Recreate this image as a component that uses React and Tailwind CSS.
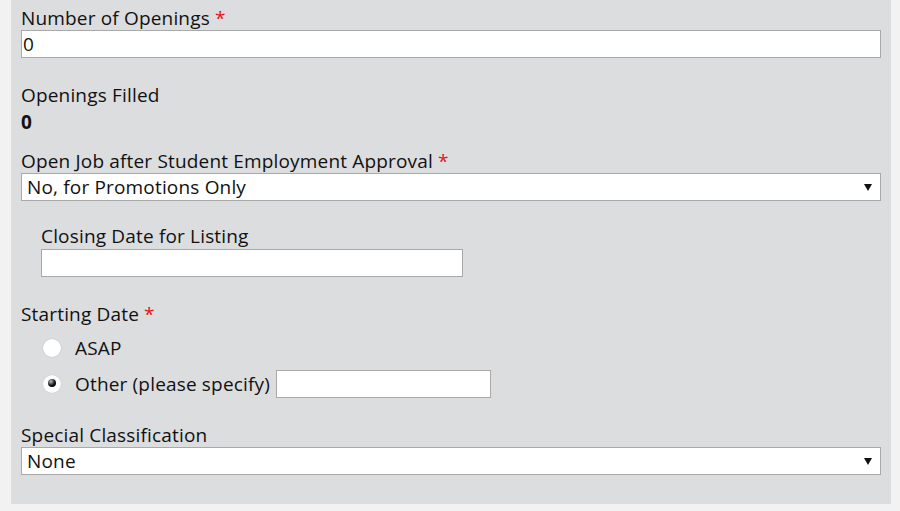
import React from 'react';

const Required = () => <span className="text-[#e8121b]"> *</span>;

const Label = ({ children, className = '' }) => (
  <div className={`text-[19px] leading-[24px] tracking-[0.17px] ${className}`}>{children}</div>
);

const TextBox = ({ value = '', className = '' }) => (
  <input
    type="text"
    readOnly
    defaultValue={value}
    className={`h-[28px] border border-[#a9a9a9] bg-white pl-[1px] text-[19px] leading-[24px] text-[#111] outline-none ${className}`}
    style={{ fontFamily: '"Open Sans", sans-serif' }}
  />
);

const Select = ({ value }) => (
  <div className="flex h-[28px] w-full items-center justify-between border border-[#a9a9a9] bg-white pl-[5px] pr-[8px]">
    <span className="text-[19px] leading-[24px] tracking-[0.17px]">{value}</span>
    <svg width="8" height="7" viewBox="0 0 8 7">
      <polygon points="0,0 8,0 4,7" fill="#111" />
    </svg>
  </div>
);

const Radio = ({ checked }) => (
  <div className="relative h-[18px] w-[18px] rounded-full bg-white shadow-[0_0_1px_rgba(0,0,0,0.25)]">
    {checked && (
      <div className="absolute left-[5px] top-[4px] h-[8px] w-[8px] rounded-full bg-[radial-gradient(circle_at_35%_30%,#bbbbbb,#111111_55%,#000000)]" />
    )}
  </div>
);

export default function App() {
  return (
    <div
      className="min-h-[511px] bg-[#f2f2f2] pl-[11px] pr-[9px] text-[#111]"
      style={{ fontFamily: '"Open Sans", sans-serif' }}
    >
      <div className="flex flex-col bg-[#dcdddf] px-[10px] pt-[6px] pb-[29px]">
        <Label>
          Number of Openings<Required />
        </Label>
        <TextBox value="0" className="w-full" />

        <Label className="mt-[25px]">Openings Filled</Label>
        <Label className="mt-[3px] font-bold">0</Label>

        <Label className="mt-[15px]">
          Open Job after Student Employment Approval<Required />
        </Label>
        <Select value="No, for Promotions Only" />

        <div className="mt-[23px] flex flex-col pl-[20px]">
          <Label>Closing Date for Listing</Label>
          <TextBox className="mt-[1px] w-[422px]" />
        </div>

        <Label className="mt-[25px]">
          Starting Date<Required />
        </Label>
        <div className="mt-[10px] flex h-[24px] items-center">
          <div className="ml-[22px] w-[32px]">
            <Radio />
          </div>
          <Label>ASAP</Label>
        </div>
        <div className="mt-[10px] flex h-[28px] items-center">
          <div className="ml-[22px] w-[32px]">
            <Radio checked />
          </div>
          <Label>Other (please specify)</Label>
          <TextBox className="ml-[6px] w-[215px]" />
        </div>

        <Label className="mt-[25px]">Special Classification</Label>
        <Select value="None" />
      </div>
    </div>
  );
}
